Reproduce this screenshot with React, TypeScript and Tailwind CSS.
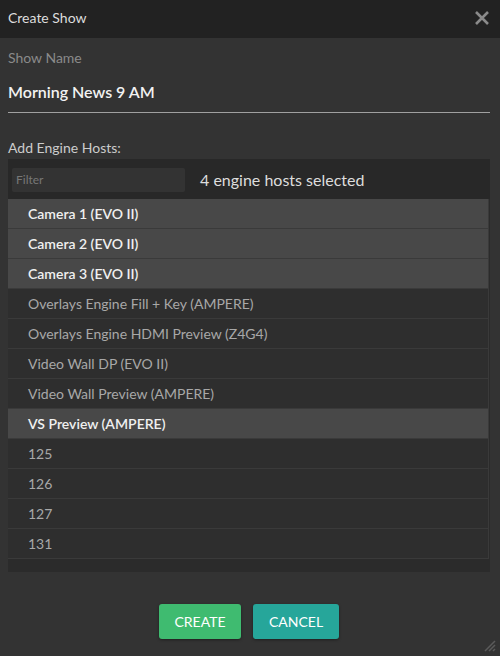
import React from "react";

type Host = {
  name: string;
  selected: boolean;
};

const hosts: Host[] = [
  { name: "Camera 1 (EVO II)", selected: true },
  { name: "Camera 2 (EVO II)", selected: true },
  { name: "Camera 3 (EVO II)", selected: true },
  { name: "Overlays Engine Fill + Key (AMPERE)", selected: false },
  { name: "Overlays Engine HDMI Preview (Z4G4)", selected: false },
  { name: "Video Wall DP (EVO II)", selected: false },
  { name: "Video Wall Preview (AMPERE)", selected: false },
  { name: "VS Preview (AMPERE)", selected: true },
  { name: "125", selected: false },
  { name: "126", selected: false },
  { name: "127", selected: false },
  { name: "131", selected: false },
];

const HostRow = (props: { host: Host }) => {
  const { host } = props;
  return (
    <div
      className={
        host.selected
          ? "flex h-[30px] items-center border-b border-[#3a3a3a] bg-[#484848] pl-5 text-[14px] font-semibold text-[#f0f0f0]"
          : "flex h-[30px] items-center border-b border-[#3a3a3a] bg-[#2e2e2e] pl-5 text-[14px] text-[#a8a8a8]"
      }
    >
      {host.name}
    </div>
  );
};

const App = () => {
  return (
    <div
      className="relative flex h-[656px] w-[500px] flex-col bg-[#333333]"
      style={{ fontFamily: "Lato, 'Open Sans', sans-serif" }}
    >
      {/* Title bar */}
      <div className="flex h-[38px] items-center justify-between bg-[#222222] pb-[3px] pl-2 pr-[10px]">
        <span className="text-[14px] text-[#dddddd]">Create Show</span>
        <svg width="16" height="16" viewBox="0 0 16 16">
          <path
            d="M2 2 L14 14 M14 2 L2 14"
            stroke="#8a8a8a"
            strokeWidth="2.6"
            strokeLinecap="butt"
          />
        </svg>
      </div>

      {/* Body */}
      <div className="flex flex-col pl-2 pr-[10px]">
        <div className="mt-[12px] text-[14px] leading-[16px] text-[#8a8a8a]">
          Show Name
        </div>
        <div className="mt-[16px] border-b border-[#a0a0a0] pb-[10px] text-[16px] font-semibold leading-[20px] text-[#f2f2f2]">
          Morning News 9 AM
        </div>

        <div className="mt-[27px] text-[14px] leading-[16px] text-[#cccccc]">
          Add Engine Hosts:
        </div>

        <div className="mt-[3px] flex h-[413px] flex-col bg-[#2b2b2b]">
          <div className="flex h-[40px] items-center gap-[15px] bg-[#282828] pl-1 pt-[2px]">
            <div className="flex h-[24px] w-[173px] items-center rounded-[2px] bg-[#333333] pl-1 text-[12px] text-[#777777]">
              Filter
            </div>
            <span className="pb-[1px] text-[16px] text-[#dddddd]">
              4 engine hosts selected
            </span>
          </div>
          <div className="mr-[1px] border-r border-[#3a3a3a]">
            {hosts.map((h) => (
              <HostRow key={h.name} host={h} />
            ))}
          </div>
        </div>

        {/* Actions */}
        <div className="mt-[32px] flex justify-center gap-3">
          <button className="h-[35px] w-[82px] rounded-[3px] bg-[#3fbb70] text-[14px] text-white shadow-[0_1px_3px_rgba(0,0,0,0.4)]">
            CREATE
          </button>
          <button className="h-[35px] w-[86px] rounded-[3px] bg-[#26a69a] text-[14px] text-white shadow-[0_1px_3px_rgba(0,0,0,0.4)]">
            CANCEL
          </button>
        </div>
      </div>

      {/* Resize grip */}
      <svg
        className="absolute bottom-[4px] right-[4px]"
        width="12"
        height="12"
        viewBox="0 0 12 12"
      >
        <path
          d="M1 11 L11 1 M5 11 L11 5 M9 11 L11 9"
          stroke="#5a5a5a"
          strokeWidth="1.5"
        />
      </svg>
    </div>
  );
};

export default App;
